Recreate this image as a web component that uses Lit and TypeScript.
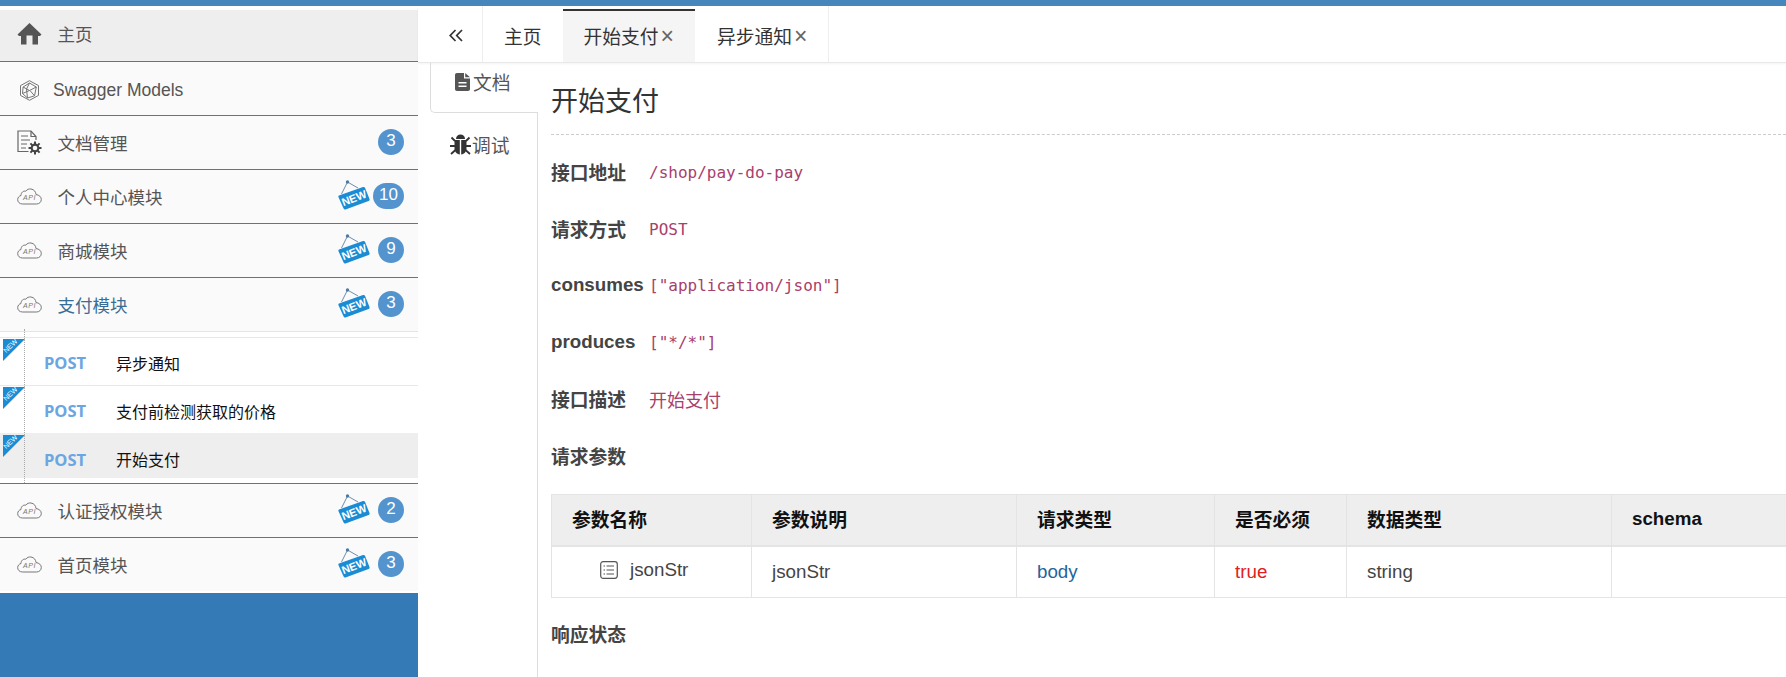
import { LitElement, html, css } from "lit";
import { customElement } from "lit/decorators.js";

const cloud = html`<svg class="ico cloud" viewBox="0 0 25 17" width="25" height="17"><path d="M5.5 16 C2.5 16 .7 14 .7 11.6 C.7 9.4 2.2 7.9 4 7.5 C4 4.4 6.4 2.6 8.8 3.2 C10 1.4 12 .7 14 1 C17 1.4 18.9 3.8 19 6.6 C22 6.8 24.3 8.8 24.3 11.5 C24.3 14 22.3 16 19.5 16 Z" fill="none" stroke="#777" stroke-width="1"/><text x="12.5" y="12.4" text-anchor="middle" class="api">API</text></svg>`;

const newSign = html`<svg class="sign" viewBox="0 0 32 30" width="32" height="30"><path d="M9.5 2 L3.5 14 M9.5 2 L20 8" stroke="#6a8fb0" stroke-width="1" fill="none"/><circle cx="9.5" cy="2" r="1.7" fill="#4a7aa5"/><path d="M1 15.5 L25 7 C26 6.7 26.6 7 27 7.8 L31.5 19 C31.8 20 31.5 20.6 30.6 21 L7.5 29.5 C6.6 29.8 6 29.5 5.6 28.6 L.4 17 C.2 16.3 .4 15.8 1 15.5 Z" fill="#1b8cd4"/><text x="16" y="22" text-anchor="middle" transform="rotate(-21 16 18)" class="newt">NEW</text></svg>`;

const home = html`<svg class="ico" viewBox="0 0 24 22" width="24" height="22"><path d="M12 0 L24 11.5 L22.5 13 H20.5 V21.5 H15 V12.5 H9 V21.5 H3.5 V13 H1.5 L0 11.5 Z" fill="#555"/></svg>`;

const hexa = html`<svg class="ico" viewBox="0 0 20 21" width="20" height="21"><g fill="none" stroke="#777" stroke-width="1"><path d="M10 .7 L19 5.6 V15.4 L10 20.3 L1 15.4 V5.6 Z"/><path d="M10 3 L16.8 7 L15 15.8 L8 18 L3 13.5 L3.6 7 Z"/><path d="M3.6 7 L10 10.5 L16.8 7 M10 3 L7 9 L8 18 M10.5 10.5 L15 15.8 M3 13.5 L10 10.5"/></g></svg>`;

const docGear = html`<svg class="ico" viewBox="0 0 25 25" width="25" height="25"><g fill="none" stroke="#666" stroke-width="1.2"><path d="M11.5 21.5 H1 V1 H14 L19 6.5 V10"/><path d="M14 1 V6.5 H19"/><path d="M4 6 H11 M4 10 H13 M4 14 H10 M4 18 H9"/></g><path d="M18 11.5 V24.5 M11.5 18 H24.5 M13.4 13.4 L22.6 22.6 M22.6 13.4 L13.4 22.6" stroke="#444" stroke-width="2"/><circle cx="18" cy="18" r="4.4" fill="#444"/><circle cx="18" cy="18" r="2.3" fill="#fafafa"/></svg>`;

const fileIco = html`<svg class="nico" viewBox="0 0 15 18" width="15" height="18"><path d="M2 0 H9 V5.5 H15 V16 C15 17.2 14.2 18 13 18 H2 C.8 18 0 17.2 0 16 V2 C0 .8 .8 0 2 0 Z M10.2 0 L15 4.3 H10.2 Z M3.5 9 V10.5 H11.5 V9 Z M3.5 12.5 V14 H11.5 V12.5 Z" fill="#555" fill-rule="evenodd"/></svg>`;

const bug = html`<svg class="nico" viewBox="0 0 21 21" width="21" height="21"><g fill="#333"><path d="M6 5 C6 2 8 .5 10.5 .5 C13 .5 15 2 15 5 Z"/><path d="M4.5 6 H9.8 V20.5 C6.5 20.2 4.5 17.5 4.5 14 Z"/><path d="M11.2 6 H16.5 V14 C16.5 17.5 14.5 20.2 11.2 20.5 Z"/></g><path d="M1.5 3.5 L5 7 M19.5 3.5 L16 7 M0 12 H5 M21 12 H16 M1 20 L5.5 16 M20 20 L15.5 16" stroke="#333" stroke-width="1.8" fill="none"/></svg>`;

const treeIco = html`<svg viewBox="0 0 18 18" width="18" height="18"><rect x=".7" y=".7" width="16.6" height="16.6" rx="2.5" fill="none" stroke="#555" stroke-width="1.2"/><path d="M6.5 5 H14 M6.5 9 H14 M6.5 13 H14 M3.5 5 H5 M3.5 9 H5 M3.5 13 H5" stroke="#555" stroke-width="1.2"/></svg>`;

const ribbon = html`<svg class="ribbon" viewBox="0 0 22 22" width="22" height="22"><path d="M0 0 H22 L0 22 Z" fill="#1b8cd4"/><text x="7.5" y="9.2" text-anchor="middle" transform="rotate(-45 7.5 7)" class="rt">NEW</text></svg>`;

const collapse = html`<svg viewBox="0 0 14 13" width="14" height="13"><path d="M6.5 1 L1.2 6.5 L6.5 12 M13 1 L7.7 6.5 L13 12" fill="none" stroke="#333" stroke-width="1.7"/></svg>`;

const modulesA = [{ n: "个人中心模块", c: "10" }, { n: "商城模块", c: "9" }];
const modulesB = [{ n: "认证授权模块", c: "2" }, { n: "首页模块", c: "3" }];
const posts = [{ t: "异步通知" }, { t: "支付前检测获取的价格" }, { t: "开始支付", on: true }];
const infos = [
  { k: "接口地址", v: "/shop/pay-do-pay" },
  { k: "请求方式", v: "POST" },
  { k: "consumes", v: '["application/json"]' },
  { k: "produces", v: '["*/*"]' },
  { k: "接口描述", v: "开始支付" },
];

@customElement("app-root")
export class AppRoot extends LitElement {
  static styles = css`
    :host { display: flex; flex-direction: column; height: 100vh; overflow: hidden; background: #fff; color: #333;
      font-family: "Liberation Sans", "Noto Sans CJK SC", sans-serif; }
    .top { height: 6px; background: #4587bd; flex: none; }
    .body { flex: 1; display: flex; min-height: 0; }
    .side { width: 418px; flex: none; display: flex; flex-direction: column; padding-top: 4px; box-sizing: border-box; }
    .row { box-sizing: border-box; height: 54px; flex: none; display: flex; align-items: center; border-bottom: 1px solid #3f7fae; background: #fafafa;
      font-size: 17.5px; color: #555; padding: 0 14px 1px 17px; }
    .row.home { background: #eee; height: 52px; padding-bottom: 4px; }
    .row.swag { padding-bottom: 0; padding-top: 3px; }
    .row .ico { flex: none; width: 25px; }
    .row .lbl { margin-left: 15.5px; }
    .row .lbl.en { margin-left: 11px; }
    .row.open { color: #3a6d96; border-bottom-color: #e5e5e5; }
    .row.last { border-bottom: 1px solid #fff; }
    .api { font: italic 7px "Liberation Sans", sans-serif; fill: #777; letter-spacing: .5px; }
    .meta { margin-left: auto; display: flex; align-items: center; }
    .sign { flex: none; margin-top: -2px; }
    .newt { font: bold 11px "Liberation Sans", sans-serif; fill: #fff; }
    .slot { width: 34px; display: flex; justify-content: flex-end; }
    .badge { min-width: 26px; height: 26px; line-height: 24px; box-sizing: border-box; padding: 0 6px; border-radius: 13px; background: #5393ce;
      color: #fff; font-size: 17px; text-align: center; }
    .kids { position: relative; box-sizing: border-box; padding-top: 5px; border-bottom: 1px solid #3f7fae; flex: none; height: 152px; }
    .kids::before { content: ""; position: absolute; left: 24px; top: -3px; bottom: 0; border-left: 1px dotted #aaa; z-index: 1; }
    .kid { position: relative; box-sizing: border-box; height: 48px; border-top: 1px solid #e8e8e8; display: flex; align-items: center; font-size: 16px; color: #111; padding-top: 2px; }
    .kid.on { background: #eee; height: 45px; border-top-color: #eee; padding-top: 6px; }
    .kid .m { margin-left: 44px; width: 72px; font: bold 16.5px "Open Sans", sans-serif; color: #6ba6e2; }
    .ribbon { position: absolute; left: 3px; top: 1px; z-index: 2; }
    .rt { font: 7px "Liberation Sans", sans-serif; fill: #fff; }
    .fill { flex: 1; background: #337ab7; margin-top: 1px; }
    .main { flex: 1; min-width: 0; display: flex; flex-direction: column; }
    .tabs { height: 57px; flex: none; display: flex; border-bottom: 1px solid #e8e8e8; box-shadow: 0 1px 2px rgba(0,0,0,.05); box-sizing: border-box; font-size: 18.75px; color: #333; }
    .tab { display: flex; align-items: center; padding: 2px 21px 0 22px; border-right: 1px solid #eee; }
    .tab.coll { width: 65px; box-sizing: border-box; justify-content: center; padding: 3px 0 0 12px; }
    .tab.home { border-right: 0; padding: 2px 21px 0 21px; }
    .tab.act { background: #f5f5f5; border-top: 2px solid #333; margin-top: 3px; border-right: 0; padding: 0 21px 3px 21px; }
    .x { font-size: 23px; line-height: 1; font-weight: 400; color: #666; margin-left: 2px; padding-top: 2px; }
    .pane { flex: 1; display: flex; min-height: 0; }
    .nav { width: 108px; margin-left: 12px; flex: none; display: flex; flex-direction: column; font-size: 18.75px; color: #555; }
    .nav .t { display: flex; align-items: center; box-sizing: border-box; }
    .t.doc { height: 50px; border-left: 1px solid #ddd; border-bottom: 1px solid #ddd; border-bottom-left-radius: 5px; padding: 0 0 12px 24px; gap: 3px; }
    .t.dbg { height: 62px; border-right: 1px solid #ddd; padding: 0 0 0 20px; gap: 1px; }
    .nav .rest { flex: 1; border-right: 1px solid #ddd; }
    .nico { flex: none; }
    .cont { flex: 1; min-width: 0; overflow: hidden; padding-left: 13px; }
    h3 { margin: 0; height: 72px; box-sizing: border-box; font-size: 27px; font-weight: 400; line-height: 78px; color: #333; border-bottom: 1px dashed #ccc; }
    .info { display: flex; align-items: center; height: 56.7px; margin: 0; }
    h3 + .info { margin-top: 8.6px; }
    .k { width: 98px; flex: none; font-weight: 700; font-size: 18.75px; color: #444; }
    code { font: 16px "DejaVu Sans Mono", "Noto Sans CJK SC", monospace; color: #a8406c; padding-top: 1px; }
    code.cn { font-size: 18px; }
    table { border-collapse: collapse; table-layout: fixed; width: 1300px; margin-top: 10.4px; font-size: 18.75px; }
    th, td { box-sizing: border-box; border: 1px solid #e4e4e4; text-align: left; padding: 0 0 0 20px; }
    th { height: 51px; background: #eee; color: #111; font-weight: 700; border-bottom-width: 2px; padding-bottom: 2px; }
    td { height: 52px; color: #444; }
    .c1 { width: 200px; } .c2 { width: 265px; } .c3 { width: 198px; } .c4 { width: 132px; } .c5 { width: 265px; }
    .tree { display: inline-flex; align-items: center; gap: 12px; margin-left: 28px; }
    .body-t { color: #23649c; } .true-t { color: #e0201c; }
    .resp { height: 57px; margin-top: 7px; display: flex; align-items: center; font-weight: 700; font-size: 18.75px; color: #444; }
  `;

  private mod(name: string, count: string, cls = "") {
    return html`<div class="row ${cls}">${cloud}<span class="lbl">${name}</span>
      <div class="meta">${newSign}<div class="slot"><span class="badge">${count}</span></div></div></div>`;
  }

  render() {
    return html`
      <div class="top"></div>
      <div class="body">
        <aside class="side">
          <div class="row home">${home}<span class="lbl">主页</span></div>
          <div class="row swag">${hexa}<span class="lbl en">Swagger Models</span></div>
          <div class="row">${docGear}<span class="lbl">文档管理</span><div class="meta"><div class="slot"><span class="badge">3</span></div></div></div>
          ${modulesA.map((m) => this.mod(m.n, m.c))}
          ${this.mod("支付模块", "3", "open")}
          <div class="kids">
            ${posts.map((p) => html`<div class="kid ${p.on ? "on" : ""}">${ribbon}<span class="m">POST</span><span>${p.t}</span></div>`)}
          </div>
          ${this.mod(modulesB[0].n, modulesB[0].c)}
          ${this.mod(modulesB[1].n, modulesB[1].c, "last")}
          <div class="fill"></div>
        </aside>
        <main class="main">
          <div class="tabs">
            <div class="tab coll">${collapse}</div>
            <div class="tab home">主页</div>
            <div class="tab act">开始支付<span class="x">×</span></div>
            <div class="tab">异步通知<span class="x">×</span></div>
          </div>
          <div class="pane">
            <div class="nav">
              <div class="t doc">${fileIco}<span>文档</span></div>
              <div class="t dbg">${bug}<span>调试</span></div>
              <div class="rest"></div>
            </div>
            <div class="cont">
              <h3>开始支付</h3>
              ${infos.map((i) => html`<div class="info"><span class="k">${i.k}</span><code class=${i.k === "接口描述" ? "cn" : ""}>${i.v}</code></div>`)}
              <div class="info"><span class="k">请求参数</span></div>
              <table>
                <thead><tr>
                  <th class="c1">参数名称</th><th class="c2">参数说明</th><th class="c3">请求类型</th><th class="c4">是否必须</th><th class="c5">数据类型</th><th>schema</th>
                </tr></thead>
                <tbody><tr>
                  <td><span class="tree">${treeIco}<span>jsonStr</span></span></td><td>jsonStr</td><td class="body-t">body</td><td class="true-t">true</td><td>string</td><td></td>
                </tr></tbody>
              </table>
              <div class="resp">响应状态</div>
            </div>
          </div>
        </main>
      </div>
    `;
  }
}
